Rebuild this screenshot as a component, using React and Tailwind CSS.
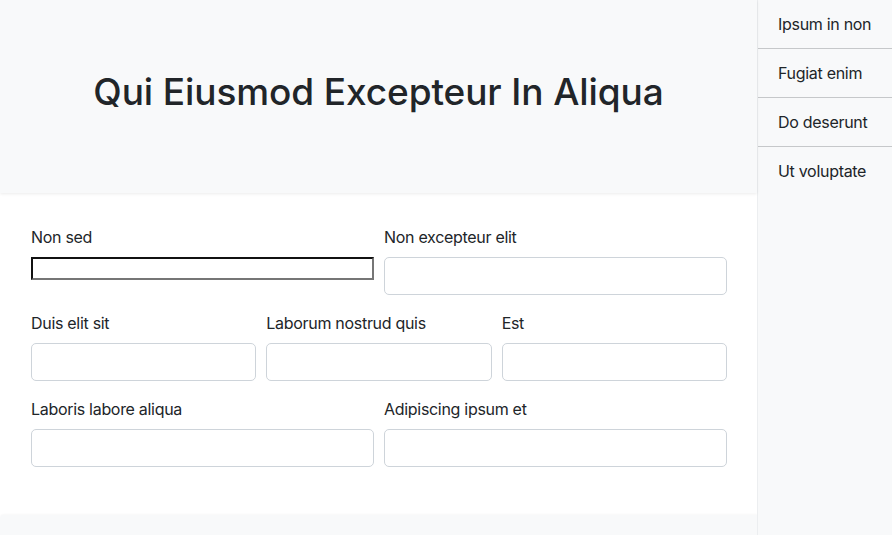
export default function App() {
  const font = { fontFamily: "Inter, 'Noto Sans', 'Liberation Sans', sans-serif" };
  const inputCls = "block w-full h-[38px] rounded-[5px] border border-[#ced4da] bg-white";
  const Label = ({ children }) => (
    <label className="block text-[16px] leading-[24px] tracking-[-0.3px] text-[#212529] mb-2">{children}</label>
  );
  return (
    <div className="flex w-[892px] h-[535px] overflow-hidden bg-white text-[#212529]" style={font}>
      <main className="w-[757px] flex flex-col">
        <header className="h-[193px] bg-[#f8f9fa] shadow-[0_1px_3px_rgba(0,0,0,0.08)] flex items-center justify-center relative z-10">
          <h1 className="text-[37px] leading-[44px] font-medium tracking-[-0.1px] text-[#212529] pb-[10px]">
            Qui Eiusmod Excepteur In Aliqua
          </h1>
        </header>
        <section className="bg-white pl-[31px] pr-[30px] pt-[32px] pb-[48px] flex flex-col gap-[16px]">
          <div className="grid grid-cols-2 gap-x-[10px]">
            <div>
              <Label>Non sed</Label>
              <div className="h-[23px] border-2 border-t-[#111] border-l-[#111] border-b-[#767676] border-r-[#767676] bg-white mt-[1px]" />
            </div>
            <div>
              <Label>Non excepteur elit</Label>
              <div className={inputCls} />
            </div>
          </div>
          <div className="grid grid-cols-3 gap-x-[10px]">
            <div>
              <Label>Duis elit sit</Label>
              <div className={inputCls} />
            </div>
            <div>
              <Label>Laborum nostrud quis</Label>
              <div className={inputCls} />
            </div>
            <div>
              <Label>Est</Label>
              <div className={inputCls} />
            </div>
          </div>
          <div className="grid grid-cols-2 gap-x-[10px]">
            <div>
              <Label>Laboris labore aliqua</Label>
              <div className={inputCls} />
            </div>
            <div>
              <Label>Adipiscing ipsum et</Label>
              <div className={inputCls} />
            </div>
          </div>
        </section>
        <div className="flex-1 bg-[#f8f9fa] rounded-tl-[4px] shadow-[0_-1px_2px_rgba(0,0,0,0.03)]" />
      </main>
      <aside className="w-[135px] bg-[#f8f9fa] border-l border-[#eceef0]">
        {["Ipsum in non", "Fugiat enim", "Do deserunt", "Ut voluptate"].map((t, i) => (
          <div
            key={t}
            className={`pl-[20px] py-[12px] text-[16px] leading-[24px] tracking-[-0.3px] text-[#212529] ${i < 3 ? "border-b border-[#c6c8ca]" : ""}`}
          >
            {t}
          </div>
        ))}
      </aside>
    </div>
  );
}
